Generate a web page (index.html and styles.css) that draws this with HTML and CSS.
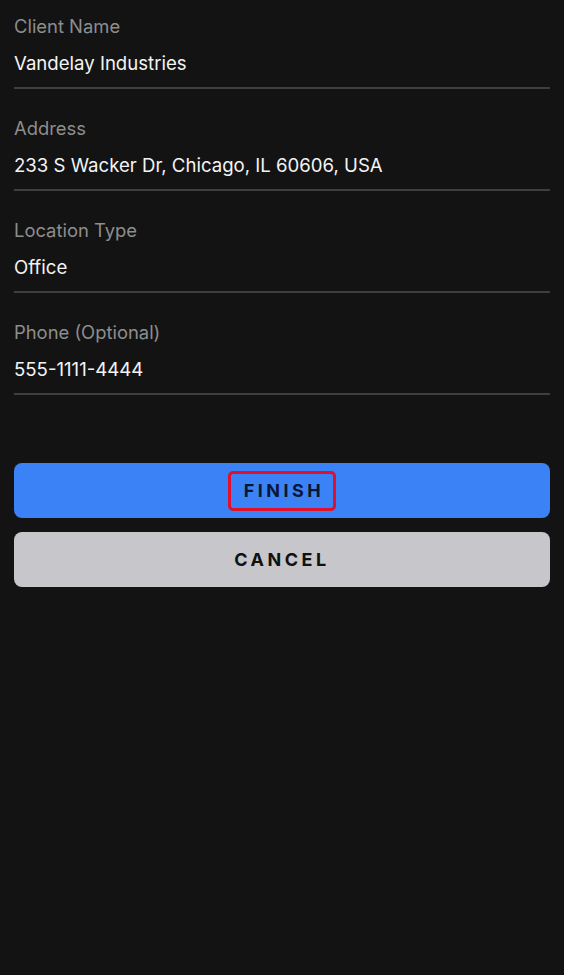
FILE: index.html
```html
<!DOCTYPE html>
<html>
<head>
<meta charset="utf-8">
<link rel="stylesheet" href="styles.css">
</head>
<body>
<div class="page">
  <div class="fields">
    <div class="field">
      <div class="label">Client Name</div>
      <div class="value">Vandelay Industries</div>
    </div>
    <div class="field">
      <div class="label">Address</div>
      <div class="value">233 S Wacker Dr, Chicago, IL 60606, USA</div>
    </div>
    <div class="field">
      <div class="label">Location Type</div>
      <div class="value">Office</div>
    </div>
    <div class="field">
      <div class="label">Phone (Optional)</div>
      <div class="value">555-1111-4444</div>
    </div>
  </div>
  <div class="actions">
    <button class="btn btn-primary"><span class="highlight">FINISH</span></button>
    <button class="btn btn-secondary">CANCEL</button>
  </div>
</div>
</body>
</html>
```
FILE: styles.css
```css
html, body {
  margin: 0;
  padding: 0;
  background: #131313;
  height: 100%;
}
body {
  font-family: Inter, "Noto Sans", sans-serif;
}
.page {
  padding: 15px 14px 0 14px;
}
.fields {
  display: flex;
  flex-direction: column;
  gap: 28px;
}
.field {
  display: flex;
  flex-direction: column;
  gap: 14px;
  padding-bottom: 12px;
  border-bottom: 2px solid #3f3f3f;
}
.label {
  font-size: 18.4px;
  line-height: 22px;
  color: #8d8d8d;
}
.value {
  font-size: 18.6px;
  line-height: 24px;
  color: #f4f4f4;
}
.actions {
  margin-top: 68px;
  display: flex;
  flex-direction: column;
  gap: 14px;
}
.btn {
  height: 55px;
  border: none;
  border-radius: 8px;
  font-family: Inter, "Noto Sans", sans-serif;
  font-weight: 700;
  font-size: 18px;
  letter-spacing: 3.5px;
  display: flex;
  align-items: center;
  justify-content: center;
}
.btn-primary {
  background: #3b82f6;
  color: #0b1634;
}
.btn-secondary {
  background: #c6c6cb;
  color: #111111;
}
.highlight {
  border: 3px solid #e0102a;
  border-radius: 5px;
  padding: 6px 9px 6px 13px;
  line-height: 22px;
}
```
